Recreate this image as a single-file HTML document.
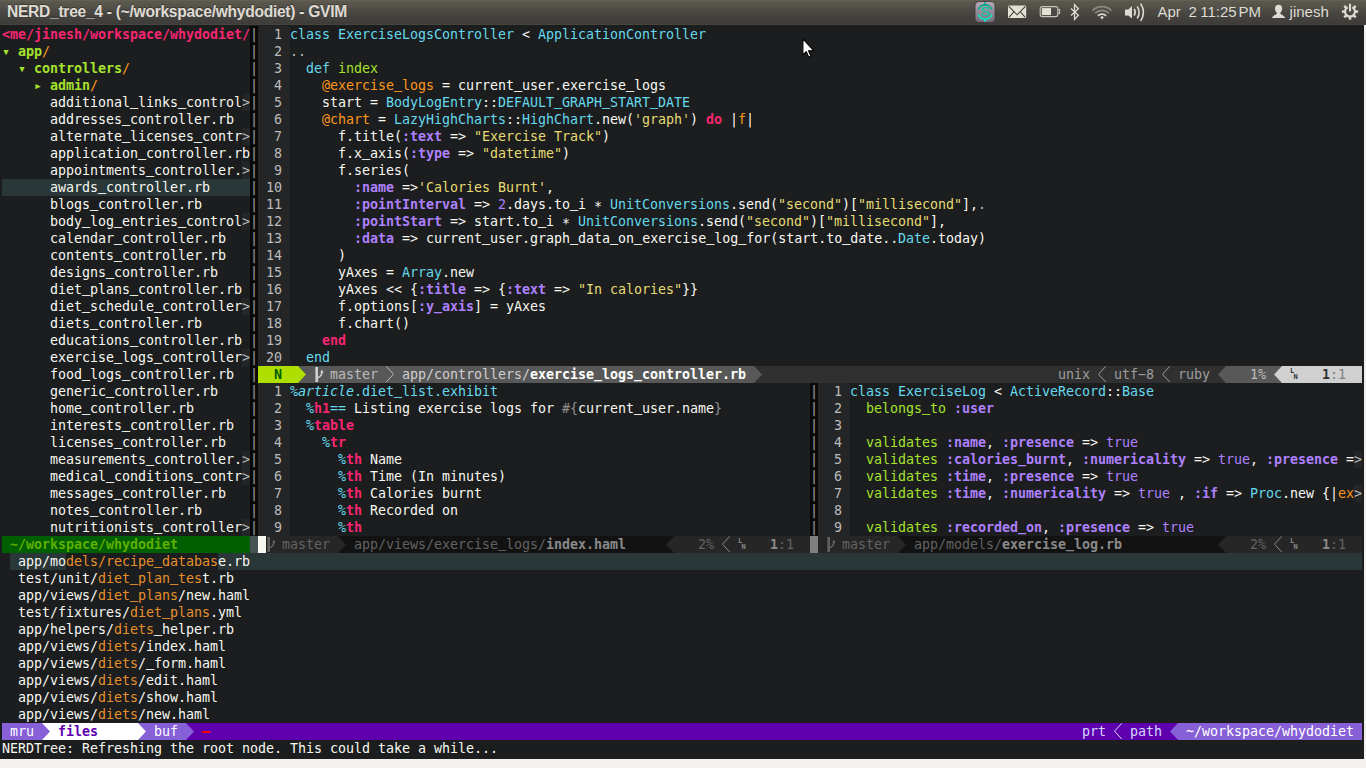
<!DOCTYPE html>
<html><head><meta charset="utf-8"><title>GVIM</title>
<style>
html,body{margin:0;padding:0}
body{width:1366px;height:768px;overflow:hidden;background:#f2f1f0;position:relative}
#vim{position:absolute;left:0;top:25px;width:1364px;height:734px;background:#1b1d1e}
#top{position:absolute;left:0;top:0;width:1366px;height:25px;background:linear-gradient(#656355 0,#5b584e 1.5px,#54514a 7px,#4a4944 11px,#43423e 17px,#3e3d39 23.5px,#45443f 24px,#45443f 25px);}
#title{position:absolute;left:7px;top:3px;font:bold 15.6px "Liberation Sans","DejaVu Sans",sans-serif;color:#dfdbd2;white-space:pre;letter-spacing:-0.28px;text-shadow:0 -1px 0 rgba(0,0,0,.35)}
.pt{position:absolute;top:3px;font:15px "Liberation Sans","DejaVu Sans",sans-serif;color:#dfdbd2;white-space:pre}
.b{position:absolute}
.r{position:absolute;left:2px;height:17px;width:1360px;font:13.3333px/17px "DejaVu Sans Mono","Liberation Mono",monospace;letter-spacing:-0.0242px;white-space:pre;color:#f8f8f2}
.r>span{position:absolute;top:0}
.hy{display:inline-block;transform:scaleX(2)}
.as{position:relative;top:2px}
.us{position:relative;top:-2px;text-shadow:0 0 0 currentColor,0 0 0 currentColor}
.n{color:#f8f8f2}
.k{color:#f92672;font-weight:bold}
.d,.t{color:#66d9ef}
.ti{color:#66d9ef;font-style:italic}
.f{color:#a6e22e}
.s{color:#e6db74}
.i{color:#fd971f}
.m{color:#e5902d}
.y{color:#ae81ff;font-weight:bold}
.u{color:#ae81ff}
.g{color:#8f8f8f}
.x,.ln{color:#bcbcbc}
.sk{color:#bcbcbc}
.vs{color:#808080;font-weight:bold}
.root{color:#f92672;font-weight:bold}
.dir,.tri{color:#a6e22e;font-weight:bold}
.sl{color:#fd971f}
.mN{color:#005f00;font-weight:bold}
.b2{font-weight:bold}
.c-303030{color:#303030}
.c-5f00af{color:#5f00af}
.c-5faf00{color:#5faf00}
.c-626262{color:#626262}
.c-808080{color:#808080}
.c-8a8a8a{color:#8a8a8a}
.c-9e9e9e{color:#9e9e9e}
.c-bcbcbc{color:#bcbcbc}
.c-d0d0d0{color:#d0d0d0}
.c-d7d7ff{color:#d7d7ff}
.c-ff0000{color:#ff0000}
.c-fff{color:#fff}
.r>span.b{position:absolute;font-weight:bold}
.b .us,.y .us,.k .us{top:-1px;text-shadow:none}
</style></head>
<body>
<div id="vim"></div>
<div id="top"></div>
<div id="title">NERD_tree_4 - (~/workspace/whydodiet) - GVIM</div>
<div class="pt" style="left:1157.4px">Apr</div>
<div class="pt" style="left:1188.4px">2</div>
<div class="pt" style="left:1200.2px">11:25</div>
<div class="pt" style="left:1238.4px">PM</div>
<div class="pt" style="left:1289.6px">jinesh</div>
<svg class="b" style="left:960px;top:0" width="406" height="24" viewBox="960 0 406 24">
<defs><linearGradient id="ig" x1="0" y1="0" x2="0" y2="1"><stop offset="0" stop-color="#b9a9b9"/><stop offset="1" stop-color="#75697a"/></linearGradient></defs>
<!-- app indicator -->
<rect x="975" y="1.5" width="20" height="21" rx="4" fill="url(#ig)" stroke="#3a3834" stroke-width="0.8"/>
<g fill="none" stroke-linecap="butt">
<path d="M978.4 9.8A7 7 0 0 1 991.8 9.8" stroke="#0fa98a" stroke-width="1.7"/>
<path d="M985.1 2.1V5.2" stroke="#0fa98a" stroke-width="1.6"/>
<path d="M978.4 14.2A7 7 0 0 0 991.8 14.2" stroke="#12e2c2" stroke-width="1.7"/>
<path d="M985.1 18.8V22" stroke="#12e2c2" stroke-width="1.6"/>
</g>
<text x="985.1" y="16.4" text-anchor="middle" font-family="Liberation Sans, sans-serif" font-size="12" fill="#10c4a4" stroke="#10c4a4" stroke-width="0.35" transform="translate(985.1 0) scale(1.2 1) translate(-985.1 0)">S</text>
<!-- mail -->
<rect x="1008" y="5.6" width="18.2" height="12.4" rx="1.2" fill="#e4e0d6"/>
<path d="M1008.8 6.4L1017.1 14.8L1025.4 6.4M1009.2 17.2L1013.6 12M1025 17.2L1020.6 12" fill="none" stroke="#3c3b37" stroke-width="1.1"/>
<!-- battery -->
<rect x="1040.2" y="6.6" width="17.6" height="10" rx="2" fill="none" stroke="#c8c4ba" stroke-width="1.1"/>
<path d="M1058.3 9.6H1059.6V13.4H1058.3" fill="none" stroke="#c8c4ba" stroke-width="1.1"/>
<rect x="1041.8" y="8.1" width="9.2" height="7" fill="#e4e0d6"/>
<!-- bluetooth -->
<path d="M1071 8.6L1078.4 15.2L1074.5 19.4V4.6L1078.4 8.8L1071 15.4" fill="none" stroke="#dfdbd2" stroke-width="1.3" stroke-linejoin="miter"/>
<!-- wifi -->
<g fill="none" stroke-width="1.7">
<path d="M1092.6 10.6A13.2 13.2 0 0 1 1111.4 10.6" stroke="#8c8a81"/>
<path d="M1095.2 13.2A9.6 9.6 0 0 1 1108.8 13.2" stroke="#8c8a81"/>
<path d="M1097.9 15.8A5.8 5.8 0 0 1 1106.1 15.8" stroke="#dfdbd2"/>
</g>
<path d="M1100.2 17.2L1102 19.4L1103.8 17.2A2.6 2.6 0 0 0 1100.2 17.2Z" fill="#dfdbd2"/>
<!-- volume -->
<path d="M1125 9.4H1128.4L1132 6V18.6L1128.4 15.4H1125Z" fill="#dfdbd2"/>
<g fill="none" stroke="#dfdbd2" stroke-width="1.6">
<path d="M1134.2 9A6.5 6.5 0 0 1 1134.2 15.6"/>
<path d="M1137.2 6.4A11 11 0 0 1 1137.2 18.4"/>
<path d="M1140.6 3.6A15 15 0 0 1 1140.6 21"/>
</g>
<!-- user -->
<path d="M1278.6 4.7C1281 4.7 1282.2 6.4 1282.2 8.6C1282.2 10.6 1281.4 12 1280.4 12.6V14C1282.6 15 1284.6 16 1285.2 18H1271.9C1272.5 16 1274.6 15 1276.8 14V12.6C1275.8 12 1275 10.6 1275 8.6C1275 6.4 1276.2 4.7 1278.6 4.7Z" fill="#dfdbd2"/>
<!-- power gear -->
<g transform="translate(1350 11.6)">
<g fill="#dfdbd2">
<rect x="-1.2" y="5.4" width="2.4" height="2.7" />
<rect x="-1.2" y="5.4" width="2.4" height="2.7" transform="rotate(45)"/>
<rect x="-1.2" y="5.4" width="2.4" height="2.7" transform="rotate(90)"/>
<rect x="-1.2" y="5.4" width="2.4" height="2.7" transform="rotate(135)"/>
<rect x="-1.2" y="5.4" width="2.4" height="2.7" transform="rotate(225)"/>
<rect x="-1.2" y="5.4" width="2.4" height="2.7" transform="rotate(270)"/>
<rect x="-1.2" y="5.4" width="2.4" height="2.7" transform="rotate(315)"/>
</g>
<path d="M-2.3 -4.45A5 5 0 1 0 2.3 -4.45" fill="none" stroke="#dfdbd2" stroke-width="2.2"/>
<rect x="-1.05" y="-7.8" width="2.1" height="7.6" fill="#dfdbd2"/>
</g>
</svg>
<svg class="b" style="left:796px;top:34px" width="24" height="28" viewBox="796 34 24 28"><polygon points="802.9,38.8 802.9,54.9 806.3,51.7 808.8,57.3 811,56.3 808.5,50.8 813.7,50.6" fill="#fff" stroke="#000" stroke-width="1.1" stroke-linejoin="round"/></svg>

<div class="b" style="left:2px;top:179px;width:248px;height:17px;background:#293739;"></div>
<div class="b" style="left:250px;top:26px;width:8px;height:510px;background:#080808;"></div>
<div class="b" style="left:258px;top:26px;width:32px;height:340px;background:#232526;"></div>
<div class="b" style="left:258px;top:383px;width:32px;height:153px;background:#232526;"></div>
<div class="b" style="left:818px;top:383px;width:32px;height:153px;background:#232526;"></div>
<div class="b" style="left:810px;top:383px;width:8px;height:153px;background:#080808;"></div>
<div class="r" style="top:26px"><span class="root" style="left:0px">&lt;me/jinesh/workspace/whydodiet/</span></div>
<div class="r" style="top:43px"><span class="tri" style="left:0px">▾</span><span class="dir" style="left:16px">app</span><span class="sl" style="left:40px">/</span></div>
<div class="r" style="top:60px"><span class="tri" style="left:16px">▾</span><span class="dir" style="left:32px">controllers</span><span class="sl" style="left:120px">/</span></div>
<div class="r" style="top:77px"><span class="tri" style="left:32px">▸</span><span class="dir" style="left:48px">admin</span><span class="sl" style="left:88px">/</span></div>
<div class="b" style="left:242px;top:94px;width:8px;height:17px;background:#232526;"></div>
<div class="r" style="top:94px"><span class="n" style="left:48px">additional<span class="us">_</span>links<span class="us">_</span>control</span><span class="x" style="left:240px">&gt;</span></div>
<div class="r" style="top:111px"><span class="n" style="left:48px">addresses<span class="us">_</span>controller.rb</span></div>
<div class="b" style="left:242px;top:128px;width:8px;height:17px;background:#232526;"></div>
<div class="r" style="top:128px"><span class="n" style="left:48px">alternate<span class="us">_</span>licenses<span class="us">_</span>contr</span><span class="x" style="left:240px">&gt;</span></div>
<div class="r" style="top:145px"><span class="n" style="left:48px">application<span class="us">_</span>controller.rb</span></div>
<div class="b" style="left:242px;top:162px;width:8px;height:17px;background:#232526;"></div>
<div class="r" style="top:162px"><span class="n" style="left:48px">appointments<span class="us">_</span>controller.</span><span class="x" style="left:240px">&gt;</span></div>
<div class="r" style="top:179px"><span class="n" style="left:48px">awards<span class="us">_</span>controller.rb</span></div>
<div class="r" style="top:196px"><span class="n" style="left:48px">blogs<span class="us">_</span>controller.rb</span></div>
<div class="b" style="left:242px;top:213px;width:8px;height:17px;background:#232526;"></div>
<div class="r" style="top:213px"><span class="n" style="left:48px">body<span class="us">_</span>log<span class="us">_</span>entries<span class="us">_</span>control</span><span class="x" style="left:240px">&gt;</span></div>
<div class="r" style="top:230px"><span class="n" style="left:48px">calendar<span class="us">_</span>controller.rb</span></div>
<div class="r" style="top:247px"><span class="n" style="left:48px">contents<span class="us">_</span>controller.rb</span></div>
<div class="r" style="top:264px"><span class="n" style="left:48px">designs<span class="us">_</span>controller.rb</span></div>
<div class="r" style="top:281px"><span class="n" style="left:48px">diet<span class="us">_</span>plans<span class="us">_</span>controller.rb</span></div>
<div class="b" style="left:242px;top:298px;width:8px;height:17px;background:#232526;"></div>
<div class="r" style="top:298px"><span class="n" style="left:48px">diet<span class="us">_</span>schedule<span class="us">_</span>controller</span><span class="x" style="left:240px">&gt;</span></div>
<div class="r" style="top:315px"><span class="n" style="left:48px">diets<span class="us">_</span>controller.rb</span></div>
<div class="r" style="top:332px"><span class="n" style="left:48px">educations<span class="us">_</span>controller.rb</span></div>
<div class="b" style="left:242px;top:349px;width:8px;height:17px;background:#232526;"></div>
<div class="r" style="top:349px"><span class="n" style="left:48px">exercise<span class="us">_</span>logs<span class="us">_</span>controller</span><span class="x" style="left:240px">&gt;</span></div>
<div class="r" style="top:366px"><span class="n" style="left:48px">food<span class="us">_</span>logs<span class="us">_</span>controller.rb</span></div>
<div class="r" style="top:383px"><span class="n" style="left:48px">generic<span class="us">_</span>controller.rb</span></div>
<div class="r" style="top:400px"><span class="n" style="left:48px">home<span class="us">_</span>controller.rb</span></div>
<div class="r" style="top:417px"><span class="n" style="left:48px">interests<span class="us">_</span>controller.rb</span></div>
<div class="r" style="top:434px"><span class="n" style="left:48px">licenses<span class="us">_</span>controller.rb</span></div>
<div class="b" style="left:242px;top:451px;width:8px;height:17px;background:#232526;"></div>
<div class="r" style="top:451px"><span class="n" style="left:48px">measurements<span class="us">_</span>controller.</span><span class="x" style="left:240px">&gt;</span></div>
<div class="b" style="left:242px;top:468px;width:8px;height:17px;background:#232526;"></div>
<div class="r" style="top:468px"><span class="n" style="left:48px">medical<span class="us">_</span>conditions<span class="us">_</span>contr</span><span class="x" style="left:240px">&gt;</span></div>
<div class="r" style="top:485px"><span class="n" style="left:48px">messages<span class="us">_</span>controller.rb</span></div>
<div class="r" style="top:502px"><span class="n" style="left:48px">notes<span class="us">_</span>controller.rb</span></div>
<div class="b" style="left:242px;top:519px;width:8px;height:17px;background:#232526;"></div>
<div class="r" style="top:519px"><span class="n" style="left:48px">nutritionists<span class="us">_</span>controller</span><span class="x" style="left:240px">&gt;</span></div>
<div class="r" style="top:26px"><span class="vs" style="left:248px">|</span></div>
<div class="r" style="top:43px"><span class="vs" style="left:248px">|</span></div>
<div class="r" style="top:60px"><span class="vs" style="left:248px">|</span></div>
<div class="r" style="top:77px"><span class="vs" style="left:248px">|</span></div>
<div class="r" style="top:94px"><span class="vs" style="left:248px">|</span></div>
<div class="r" style="top:111px"><span class="vs" style="left:248px">|</span></div>
<div class="r" style="top:128px"><span class="vs" style="left:248px">|</span></div>
<div class="r" style="top:145px"><span class="vs" style="left:248px">|</span></div>
<div class="r" style="top:162px"><span class="vs" style="left:248px">|</span></div>
<div class="r" style="top:179px"><span class="vs" style="left:248px">|</span></div>
<div class="r" style="top:196px"><span class="vs" style="left:248px">|</span></div>
<div class="r" style="top:213px"><span class="vs" style="left:248px">|</span></div>
<div class="r" style="top:230px"><span class="vs" style="left:248px">|</span></div>
<div class="r" style="top:247px"><span class="vs" style="left:248px">|</span></div>
<div class="r" style="top:264px"><span class="vs" style="left:248px">|</span></div>
<div class="r" style="top:281px"><span class="vs" style="left:248px">|</span></div>
<div class="r" style="top:298px"><span class="vs" style="left:248px">|</span></div>
<div class="r" style="top:315px"><span class="vs" style="left:248px">|</span></div>
<div class="r" style="top:332px"><span class="vs" style="left:248px">|</span></div>
<div class="r" style="top:349px"><span class="vs" style="left:248px">|</span></div>
<div class="r" style="top:366px"><span class="vs" style="left:248px">|</span></div>
<div class="r" style="top:383px"><span class="vs" style="left:248px">|</span></div>
<div class="r" style="top:400px"><span class="vs" style="left:248px">|</span></div>
<div class="r" style="top:417px"><span class="vs" style="left:248px">|</span></div>
<div class="r" style="top:434px"><span class="vs" style="left:248px">|</span></div>
<div class="r" style="top:451px"><span class="vs" style="left:248px">|</span></div>
<div class="r" style="top:468px"><span class="vs" style="left:248px">|</span></div>
<div class="r" style="top:485px"><span class="vs" style="left:248px">|</span></div>
<div class="r" style="top:502px"><span class="vs" style="left:248px">|</span></div>
<div class="r" style="top:519px"><span class="vs" style="left:248px">|</span></div>
<div class="r" style="top:383px"><span class="vs" style="left:808px">|</span></div>
<div class="r" style="top:400px"><span class="vs" style="left:808px">|</span></div>
<div class="r" style="top:417px"><span class="vs" style="left:808px">|</span></div>
<div class="r" style="top:434px"><span class="vs" style="left:808px">|</span></div>
<div class="r" style="top:451px"><span class="vs" style="left:808px">|</span></div>
<div class="r" style="top:468px"><span class="vs" style="left:808px">|</span></div>
<div class="r" style="top:485px"><span class="vs" style="left:808px">|</span></div>
<div class="r" style="top:502px"><span class="vs" style="left:808px">|</span></div>
<div class="r" style="top:519px"><span class="vs" style="left:808px">|</span></div>
<div class="r" style="top:26px"><span class="ln" style="left:272px">1</span></div>
<div class="r" style="top:26px"><span class="d" style="left:288px">class</span><span class="t" style="left:336px">ExerciseLogsController</span><span class="n" style="left:520px">&lt;</span><span class="t" style="left:536px">ApplicationController</span></div>
<div class="r" style="top:43px"><span class="ln" style="left:272px">2</span></div>
<div class="r" style="top:43px"><span class="sk" style="left:288px">..</span></div>
<div class="r" style="top:60px"><span class="ln" style="left:272px">3</span></div>
<div class="r" style="top:60px"><span class="d" style="left:304px">def</span><span class="f" style="left:336px">index</span></div>
<div class="r" style="top:77px"><span class="ln" style="left:272px">4</span></div>
<div class="r" style="top:77px"><span class="i" style="left:320px">@exercise<span class="us">_</span>logs</span><span class="n" style="left:440px">= current<span class="us">_</span>user.exercise<span class="us">_</span>logs</span></div>
<div class="r" style="top:94px"><span class="ln" style="left:272px">5</span></div>
<div class="r" style="top:94px"><span class="n" style="left:320px">start =</span><span class="t" style="left:384px">BodyLogEntry</span><span class="n" style="left:480px">::</span><span class="t" style="left:496px">DEFAULT<span class="us">_</span>GRAPH<span class="us">_</span>START<span class="us">_</span>DATE</span></div>
<div class="r" style="top:111px"><span class="ln" style="left:272px">6</span></div>
<div class="r" style="top:111px"><span class="i" style="left:320px">@chart</span><span class="n" style="left:376px">=</span><span class="t" style="left:392px">LazyHighCharts</span><span class="n" style="left:504px">::</span><span class="t" style="left:520px">HighChart</span><span class="n" style="left:592px">.new(</span><span class="s" style="left:632px">&#x27;graph&#x27;</span><span class="n" style="left:688px">)</span><span class="k" style="left:704px">do</span><span class="n" style="left:728px">|</span><span class="i" style="left:736px">f</span><span class="n" style="left:744px">|</span></div>
<div class="r" style="top:128px"><span class="ln" style="left:272px">7</span></div>
<div class="r" style="top:128px"><span class="n" style="left:336px">f.title(</span><span class="y" style="left:400px">:text</span><span class="n" style="left:448px">=&gt;</span><span class="s" style="left:472px">&quot;Exercise Track&quot;</span><span class="n" style="left:600px">)</span></div>
<div class="r" style="top:145px"><span class="ln" style="left:272px">8</span></div>
<div class="r" style="top:145px"><span class="n" style="left:336px">f.x<span class="us">_</span>axis(</span><span class="y" style="left:408px">:type</span><span class="n" style="left:456px">=&gt;</span><span class="s" style="left:480px">&quot;datetime&quot;</span><span class="n" style="left:560px">)</span></div>
<div class="r" style="top:162px"><span class="ln" style="left:272px">9</span></div>
<div class="r" style="top:162px"><span class="n" style="left:336px">f.series(</span></div>
<div class="r" style="top:179px"><span class="ln" style="left:264px">10</span></div>
<div class="r" style="top:179px"><span class="y" style="left:352px">:name</span><span class="n" style="left:400px">=&gt;</span><span class="s" style="left:416px">&#x27;Calories Burnt&#x27;</span><span class="n" style="left:544px">,</span></div>
<div class="r" style="top:196px"><span class="ln" style="left:264px">11</span></div>
<div class="r" style="top:196px"><span class="y" style="left:352px">:pointInterval</span><span class="n" style="left:472px">=&gt;</span><span class="u" style="left:496px">2</span><span class="n" style="left:504px">.days.to<span class="us">_</span>i <span class="as">*</span></span><span class="t" style="left:608px">UnitConversions</span><span class="n" style="left:728px">.send(</span><span class="s" style="left:776px">&quot;second&quot;</span><span class="n" style="left:840px">)[</span><span class="s" style="left:856px">&quot;millisecond&quot;</span><span class="n" style="left:960px">],</span><span class="sk" style="left:976px">.</span></div>
<div class="r" style="top:213px"><span class="ln" style="left:264px">12</span></div>
<div class="r" style="top:213px"><span class="y" style="left:352px">:pointStart</span><span class="n" style="left:448px">=&gt; start.to<span class="us">_</span>i <span class="as">*</span></span><span class="t" style="left:576px">UnitConversions</span><span class="n" style="left:696px">.send(</span><span class="s" style="left:744px">&quot;second&quot;</span><span class="n" style="left:808px">)[</span><span class="s" style="left:824px">&quot;millisecond&quot;</span><span class="n" style="left:928px">],</span></div>
<div class="r" style="top:230px"><span class="ln" style="left:264px">13</span></div>
<div class="r" style="top:230px"><span class="y" style="left:352px">:data</span><span class="n" style="left:400px">=&gt; current<span class="us">_</span>user.graph<span class="us">_</span>data<span class="us">_</span>on<span class="us">_</span>exercise<span class="us">_</span>log<span class="us">_</span>for(start.to<span class="us">_</span>date..</span><span class="t" style="left:896px">Date</span><span class="n" style="left:928px">.today)</span></div>
<div class="r" style="top:247px"><span class="ln" style="left:264px">14</span></div>
<div class="r" style="top:247px"><span class="n" style="left:336px">)</span></div>
<div class="r" style="top:264px"><span class="ln" style="left:264px">15</span></div>
<div class="r" style="top:264px"><span class="n" style="left:336px">yAxes =</span><span class="t" style="left:400px">Array</span><span class="n" style="left:440px">.new</span></div>
<div class="r" style="top:281px"><span class="ln" style="left:264px">16</span></div>
<div class="r" style="top:281px"><span class="n" style="left:336px">yAxes &lt;&lt; {</span><span class="y" style="left:416px">:title</span><span class="n" style="left:472px">=&gt; {</span><span class="y" style="left:504px">:text</span><span class="n" style="left:552px">=&gt;</span><span class="s" style="left:576px">&quot;In calories&quot;</span><span class="n" style="left:680px">}}</span></div>
<div class="r" style="top:298px"><span class="ln" style="left:264px">17</span></div>
<div class="r" style="top:298px"><span class="n" style="left:336px">f.options[</span><span class="y" style="left:416px">:y<span class="us">_</span>axis</span><span class="n" style="left:472px">] = yAxes</span></div>
<div class="r" style="top:315px"><span class="ln" style="left:264px">18</span></div>
<div class="r" style="top:315px"><span class="n" style="left:336px">f.chart()</span></div>
<div class="r" style="top:332px"><span class="ln" style="left:264px">19</span></div>
<div class="r" style="top:332px"><span class="k" style="left:320px">end</span></div>
<div class="r" style="top:349px"><span class="ln" style="left:264px">20</span></div>
<div class="r" style="top:349px"><span class="d" style="left:304px">end</span></div>
<div class="r" style="top:383px"><span class="ln" style="left:272px">1</span></div>
<div class="r" style="top:383px"><span class="ti" style="left:288px">%article</span><span class="t" style="left:352px">.diet<span class="us">_</span>list.exhibit</span></div>
<div class="r" style="top:400px"><span class="ln" style="left:272px">2</span></div>
<div class="r" style="top:400px"><span class="d" style="left:304px">%</span><span class="k" style="left:312px">h1</span><span class="d" style="left:328px">==</span><span class="n" style="left:352px">Listing exercise logs for</span><span class="g" style="left:560px">#{</span><span class="n" style="left:576px">current<span class="us">_</span>user.name</span><span class="g" style="left:712px">}</span></div>
<div class="r" style="top:417px"><span class="ln" style="left:272px">3</span></div>
<div class="r" style="top:417px"><span class="d" style="left:304px">%</span><span class="k" style="left:312px">table</span></div>
<div class="r" style="top:434px"><span class="ln" style="left:272px">4</span></div>
<div class="r" style="top:434px"><span class="d" style="left:320px">%</span><span class="k" style="left:328px">tr</span></div>
<div class="r" style="top:451px"><span class="ln" style="left:272px">5</span></div>
<div class="r" style="top:451px"><span class="d" style="left:336px">%</span><span class="k" style="left:344px">th</span><span class="n" style="left:368px">Name</span></div>
<div class="r" style="top:468px"><span class="ln" style="left:272px">6</span></div>
<div class="r" style="top:468px"><span class="d" style="left:336px">%</span><span class="k" style="left:344px">th</span><span class="n" style="left:368px">Time (In minutes)</span></div>
<div class="r" style="top:485px"><span class="ln" style="left:272px">7</span></div>
<div class="r" style="top:485px"><span class="d" style="left:336px">%</span><span class="k" style="left:344px">th</span><span class="n" style="left:368px">Calories burnt</span></div>
<div class="r" style="top:502px"><span class="ln" style="left:272px">8</span></div>
<div class="r" style="top:502px"><span class="d" style="left:336px">%</span><span class="k" style="left:344px">th</span><span class="n" style="left:368px">Recorded on</span></div>
<div class="r" style="top:519px"><span class="ln" style="left:272px">9</span></div>
<div class="r" style="top:519px"><span class="d" style="left:336px">%</span><span class="k" style="left:344px">th</span></div>
<div class="b" style="left:1354px;top:451px;width:8px;height:17px;background:#232526;"></div>
<div class="b" style="left:1354px;top:485px;width:8px;height:17px;background:#232526;"></div>
<div class="r" style="top:383px"><span class="ln" style="left:832px">1</span></div>
<div class="r" style="top:383px"><span class="d" style="left:848px">class</span><span class="t" style="left:896px">ExerciseLog</span><span class="n" style="left:992px">&lt;</span><span class="t" style="left:1008px">ActiveRecord</span><span class="n" style="left:1104px">::</span><span class="t" style="left:1120px">Base</span></div>
<div class="r" style="top:400px"><span class="ln" style="left:832px">2</span></div>
<div class="r" style="top:400px"><span class="f" style="left:864px">belongs<span class="us">_</span>to</span><span class="y" style="left:952px">:user</span></div>
<div class="r" style="top:417px"><span class="ln" style="left:832px">3</span></div>
<div class="r" style="top:417px"></div>
<div class="r" style="top:434px"><span class="ln" style="left:832px">4</span></div>
<div class="r" style="top:434px"><span class="f" style="left:864px">validates</span><span class="y" style="left:944px">:name</span><span class="n" style="left:984px">,</span><span class="y" style="left:1000px">:presence</span><span class="n" style="left:1080px">=&gt;</span><span class="u" style="left:1104px">true</span></div>
<div class="r" style="top:451px"><span class="ln" style="left:832px">5</span></div>
<div class="r" style="top:451px"><span class="f" style="left:864px">validates</span><span class="y" style="left:944px">:calories<span class="us">_</span>burnt</span><span class="n" style="left:1064px">,</span><span class="y" style="left:1080px">:numericality</span><span class="n" style="left:1192px">=&gt;</span><span class="u" style="left:1216px">true</span><span class="n" style="left:1248px">,</span><span class="y" style="left:1264px">:presence</span><span class="n" style="left:1344px">=</span><span class="x" style="left:1352px">&gt;</span></div>
<div class="r" style="top:468px"><span class="ln" style="left:832px">6</span></div>
<div class="r" style="top:468px"><span class="f" style="left:864px">validates</span><span class="y" style="left:944px">:time</span><span class="n" style="left:984px">,</span><span class="y" style="left:1000px">:presence</span><span class="n" style="left:1080px">=&gt;</span><span class="u" style="left:1104px">true</span></div>
<div class="r" style="top:485px"><span class="ln" style="left:832px">7</span></div>
<div class="r" style="top:485px"><span class="f" style="left:864px">validates</span><span class="y" style="left:944px">:time</span><span class="n" style="left:984px">,</span><span class="y" style="left:1000px">:numericality</span><span class="n" style="left:1112px">=&gt;</span><span class="u" style="left:1136px">true</span><span class="n" style="left:1176px">,</span><span class="y" style="left:1192px">:if</span><span class="n" style="left:1224px">=&gt;</span><span class="t" style="left:1248px">Proc</span><span class="n" style="left:1280px">.new {</span><span class="n" style="left:1328px">|</span><span class="i" style="left:1336px">ex</span><span class="x" style="left:1352px">&gt;</span></div>
<div class="r" style="top:502px"><span class="ln" style="left:832px">8</span></div>
<div class="r" style="top:502px"></div>
<div class="r" style="top:519px"><span class="ln" style="left:832px">9</span></div>
<div class="r" style="top:519px"><span class="f" style="left:864px">validates</span><span class="y" style="left:944px">:recorded<span class="us">_</span>on</span><span class="n" style="left:1040px">,</span><span class="y" style="left:1056px">:presence</span><span class="n" style="left:1136px">=&gt;</span><span class="u" style="left:1160px">true</span></div>
<div class="b" style="left:258px;top:366px;width:1104px;height:17px;background:#303030;"></div>
<div class="b" style="left:258px;top:366px;width:40px;height:17px;background:#afdf00;"></div>
<div class="b" style="left:306px;top:366px;width:448px;height:17px;background:#585858;"></div>
<svg class="b" style="left:298px;top:366px" width="8" height="17"><rect width="8" height="17" fill="#585858"/><polygon points="0,0 8,8.5 0,17" fill="#afdf00"/></svg>
<div class="r" style="top:366px"><span class="mN" style="left:272px">N</span></div>
<svg class="b" style="left:314px;top:366px;overflow:visible" width="11" height="17"><rect x="1.4" y="1" width="2.6" height="15" fill="#d0d0d0"/><path d="M3.8 11.8C6.6 10.6 7.9 9.4 7.9 6" fill="none" stroke="#d0d0d0" stroke-width="1.5"/><path d="M6.2 6.8L7.9 3.6L9.6 6.8Z" fill="#d0d0d0"/></svg>
<div class="r" style="top:366px"><span class="c-bcbcbc" style="left:328px">master</span></div>
<svg class="b" style="left:386px;top:366px" width="8" height="17"><polyline points="0.2,0.3 7.5,8.2 0.2,16.1" fill="none" stroke="#bcbcbc" stroke-width="1"/></svg>
<div class="r" style="top:366px"><span class="c-d0d0d0" style="left:400px">app/controllers/</span><span class="c-fff b" style="left:528px">exercise<span class="us">_</span>logs<span class="us">_</span>controller.rb</span></div>
<svg class="b" style="left:754px;top:366px" width="8" height="17"><rect width="8" height="17" fill="#303030"/><polygon points="0,0 8,8.5 0,17" fill="#585858"/></svg>
<div class="r" style="top:366px"><span class="c-9e9e9e" style="left:1056px">unix</span></div>
<svg class="b" style="left:1098px;top:366px" width="8" height="17"><polyline points="7.8,0.3 0.5,8.2 7.8,16.1" fill="none" stroke="#9e9e9e" stroke-width="1"/></svg>
<div class="r" style="top:366px"><span class="c-9e9e9e" style="left:1112px">utf<span class="hy">-</span>8</span></div>
<svg class="b" style="left:1162px;top:366px" width="8" height="17"><polyline points="7.8,0.3 0.5,8.2 7.8,16.1" fill="none" stroke="#9e9e9e" stroke-width="1"/></svg>
<div class="r" style="top:366px"><span class="c-9e9e9e" style="left:1176px">ruby</span></div>
<svg class="b" style="left:1218px;top:366px" width="8" height="17"><rect width="8" height="17" fill="#303030"/><polygon points="8,0 0,8.5 8,17" fill="#585858"/></svg>
<div class="b" style="left:1226px;top:366px;width:48px;height:17px;background:#585858;"></div>
<div class="r" style="top:366px"><span class="c-bcbcbc" style="left:1248px">1%</span></div>
<svg class="b" style="left:1274px;top:366px" width="8" height="17"><rect width="8" height="17" fill="#585858"/><polygon points="8,0 0,8.5 8,17" fill="#d0d0d0"/></svg>
<div class="b" style="left:1282px;top:366px;width:80px;height:17px;background:#d0d0d0;"></div>
<svg class="b" style="left:1290px;top:366px" width="8" height="17"><text x="0" y="7" font-family="DejaVu Sans Mono, monospace" font-weight="bold" font-size="7" fill="#303030">L</text><text x="3.4" y="13" font-family="DejaVu Sans Mono, monospace" font-weight="bold" font-size="7" fill="#303030">N</text></svg>
<div class="r" style="top:366px"><span class="c-303030 b" style="left:1320px">1</span><span class="c-808080" style="left:1328px">:1</span></div>
<div class="b" style="left:2px;top:536px;width:248px;height:17px;background:#005f00;"></div>
<div class="r" style="top:536px"><span class="c-5faf00 b" style="left:8px">~/workspace/whydodiet</span></div>
<div class="b" style="left:250px;top:536px;width:8px;height:17px;background:#455354;"></div>
<div class="b" style="left:258px;top:536px;width:80px;height:17px;background:#262626;"></div>
<div class="b" style="left:258px;top:536px;width:8px;height:17px;background:#f8f8f0;"></div>
<svg class="b" style="left:266px;top:536px;overflow:visible" width="11" height="17"><rect x="1.4" y="1" width="2.6" height="15" fill="#626262"/><path d="M3.8 11.8C6.6 10.6 7.9 9.4 7.9 6" fill="none" stroke="#626262" stroke-width="1.5"/><path d="M6.2 6.8L7.9 3.6L9.6 6.8Z" fill="#626262"/></svg>
<div class="r" style="top:536px"><span class="c-626262" style="left:280px">master</span></div>
<svg class="b" style="left:338px;top:536px" width="8" height="17"><rect width="8" height="17" fill="#121212"/><polygon points="0,0 8,8.5 0,17" fill="#262626"/></svg>
<div class="b" style="left:346px;top:536px;width:320px;height:17px;background:#121212;"></div>
<div class="r" style="top:536px"><span class="c-626262" style="left:352px">app/views/exercise<span class="us">_</span>logs/</span><span class="c-8a8a8a b" style="left:544px">index.haml</span></div>
<svg class="b" style="left:666px;top:536px" width="8" height="17"><rect width="8" height="17" fill="#121212"/><polygon points="8,0 0,8.5 8,17" fill="#262626"/></svg>
<div class="b" style="left:674px;top:536px;width:136px;height:17px;background:#262626;"></div>
<div class="r" style="top:536px"><span class="c-626262" style="left:696px">2%</span></div>
<svg class="b" style="left:722px;top:536px" width="8" height="17"><polyline points="7.8,0.3 0.5,8.2 7.8,16.1" fill="none" stroke="#8a8a8a" stroke-width="1"/></svg>
<svg class="b" style="left:738px;top:536px" width="8" height="17"><text x="0" y="7" font-family="DejaVu Sans Mono, monospace" font-weight="bold" font-size="7" fill="#8a8a8a">L</text><text x="3.4" y="13" font-family="DejaVu Sans Mono, monospace" font-weight="bold" font-size="7" fill="#8a8a8a">N</text></svg>
<div class="r" style="top:536px"><span class="c-8a8a8a b" style="left:768px">1</span><span class="c-626262" style="left:776px">:1</span></div>
<div class="b" style="left:810px;top:536px;width:8px;height:17px;background:#808080;"></div>
<div class="b" style="left:818px;top:536px;width:80px;height:17px;background:#262626;"></div>
<svg class="b" style="left:826px;top:536px;overflow:visible" width="11" height="17"><rect x="1.4" y="1" width="2.6" height="15" fill="#626262"/><path d="M3.8 11.8C6.6 10.6 7.9 9.4 7.9 6" fill="none" stroke="#626262" stroke-width="1.5"/><path d="M6.2 6.8L7.9 3.6L9.6 6.8Z" fill="#626262"/></svg>
<div class="r" style="top:536px"><span class="c-626262" style="left:840px">master</span></div>
<svg class="b" style="left:898px;top:536px" width="8" height="17"><rect width="8" height="17" fill="#121212"/><polygon points="0,0 8,8.5 0,17" fill="#262626"/></svg>
<div class="b" style="left:906px;top:536px;width:312px;height:17px;background:#121212;"></div>
<div class="r" style="top:536px"><span class="c-626262" style="left:912px">app/models/</span><span class="c-8a8a8a b" style="left:1000px">exercise<span class="us">_</span>log.rb</span></div>
<svg class="b" style="left:1218px;top:536px" width="8" height="17"><rect width="8" height="17" fill="#121212"/><polygon points="8,0 0,8.5 8,17" fill="#262626"/></svg>
<div class="b" style="left:1226px;top:536px;width:136px;height:17px;background:#262626;"></div>
<div class="r" style="top:536px"><span class="c-626262" style="left:1248px">2%</span></div>
<svg class="b" style="left:1274px;top:536px" width="8" height="17"><polyline points="7.8,0.3 0.5,8.2 7.8,16.1" fill="none" stroke="#8a8a8a" stroke-width="1"/></svg>
<svg class="b" style="left:1290px;top:536px" width="8" height="17"><text x="0" y="7" font-family="DejaVu Sans Mono, monospace" font-weight="bold" font-size="7" fill="#8a8a8a">L</text><text x="3.4" y="13" font-family="DejaVu Sans Mono, monospace" font-weight="bold" font-size="7" fill="#8a8a8a">N</text></svg>
<div class="r" style="top:536px"><span class="c-8a8a8a b" style="left:1320px">1</span><span class="c-626262" style="left:1328px">:1</span></div>
<div class="b" style="left:10px;top:553px;width:56px;height:17px;background:#293739;"></div>
<div class="b" style="left:218px;top:553px;width:1144px;height:17px;background:#293739;"></div>
<div class="r" style="top:553px"><span class="n" style="left:16px">app/mo</span><span class="m" style="left:64px">dels/recipe<span class="us">_</span>databas</span><span class="n" style="left:216px">e.rb</span></div>
<div class="r" style="top:570px"><span class="n" style="left:16px">test/unit/</span><span class="m" style="left:96px">diet<span class="us">_</span>plan<span class="us">_</span>tes</span><span class="n" style="left:200px">t.rb</span></div>
<div class="r" style="top:587px"><span class="n" style="left:16px">app/views/</span><span class="m" style="left:96px">diet<span class="us">_</span>plans</span><span class="n" style="left:176px">/new.haml</span></div>
<div class="r" style="top:604px"><span class="n" style="left:16px">test/fixtures/</span><span class="m" style="left:128px">diet<span class="us">_</span>plans</span><span class="n" style="left:208px">.yml</span></div>
<div class="r" style="top:621px"><span class="n" style="left:16px">app/helpers/</span><span class="m" style="left:112px">diets</span><span class="n" style="left:152px"><span class="us">_</span>helper.rb</span></div>
<div class="r" style="top:638px"><span class="n" style="left:16px">app/views/</span><span class="m" style="left:96px">diets</span><span class="n" style="left:136px">/index.haml</span></div>
<div class="r" style="top:655px"><span class="n" style="left:16px">app/views/</span><span class="m" style="left:96px">diets</span><span class="n" style="left:136px">/<span class="us">_</span>form.haml</span></div>
<div class="r" style="top:672px"><span class="n" style="left:16px">app/views/</span><span class="m" style="left:96px">diets</span><span class="n" style="left:136px">/edit.haml</span></div>
<div class="r" style="top:689px"><span class="n" style="left:16px">app/views/</span><span class="m" style="left:96px">diets</span><span class="n" style="left:136px">/show.haml</span></div>
<div class="r" style="top:706px"><span class="n" style="left:16px">app/views/</span><span class="m" style="left:96px">diets</span><span class="n" style="left:136px">/new.haml</span></div>
<div class="b" style="left:2px;top:723px;width:1360px;height:17px;background:#5f00af;"></div>
<div class="b" style="left:2px;top:723px;width:40px;height:17px;background:#875fd7;"></div>
<div class="r" style="top:723px"><span class="c-fff" style="left:8px">mru</span></div>
<svg class="b" style="left:42px;top:723px" width="8" height="17"><rect width="8" height="17" fill="#ffffff"/><polygon points="0,0 8,8.5 0,17" fill="#875fd7"/></svg>
<div class="b" style="left:50px;top:723px;width:88px;height:17px;background:#ffffff;"></div>
<div class="r" style="top:723px"><span class="c-5f00af b" style="left:56px">files</span></div>
<svg class="b" style="left:138px;top:723px" width="8" height="17"><rect width="8" height="17" fill="#875fd7"/><polygon points="0,0 8,8.5 0,17" fill="#ffffff"/></svg>
<div class="b" style="left:146px;top:723px;width:40px;height:17px;background:#875fd7;"></div>
<div class="r" style="top:723px"><span class="c-fff" style="left:152px">buf</span></div>
<svg class="b" style="left:186px;top:723px" width="8" height="17"><rect width="8" height="17" fill="#5f00af"/><polygon points="0,0 8,8.5 0,17" fill="#875fd7"/></svg>
<div class="r" style="top:723px"><span class="c-ff0000 b" style="left:200px"><span class="hy">-</span></span></div>
<div class="r" style="top:723px"><span class="c-d7d7ff" style="left:1080px">prt</span></div>
<svg class="b" style="left:1114px;top:723px" width="8" height="17"><polyline points="7.8,0.3 0.5,8.2 7.8,16.1" fill="none" stroke="#d7d7ff" stroke-width="1"/></svg>
<div class="r" style="top:723px"><span class="c-d7d7ff" style="left:1128px">path</span></div>
<svg class="b" style="left:1170px;top:723px" width="8" height="17"><rect width="8" height="17" fill="#5f00af"/><polygon points="8,0 0,8.5 8,17" fill="#875fd7"/></svg>
<div class="b" style="left:1178px;top:723px;width:184px;height:17px;background:#875fd7;"></div>
<div class="r" style="top:723px"><span class="c-fff" style="left:1184px">~/workspace/whydodiet</span></div>
<div class="r" style="top:740px"><span class="n" style="left:0px">NERDTree: Refreshing the root node. This could take a while...</span></div>
</body></html>
